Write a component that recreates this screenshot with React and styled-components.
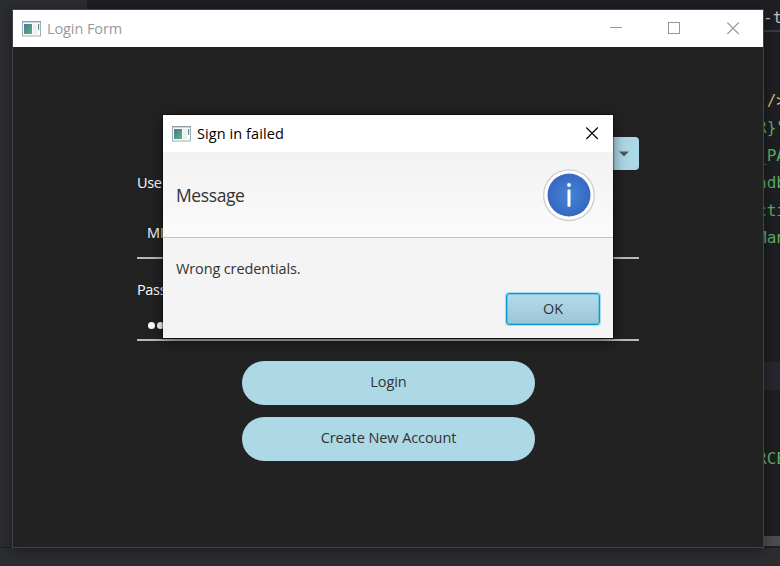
import React from 'react';
import styled, { createGlobalStyle } from 'styled-components';

const GlobalStyle = createGlobalStyle`
  * { box-sizing: border-box; }
  body {
    margin: 0;
    overflow: hidden;
    font-family: 'Open Sans', 'Noto Sans', sans-serif;
    font-size: 14.5px;
  }
`;

const Desktop = styled.div`
  position: relative;
  width: 780px;
  height: 566px;
  overflow: hidden;
  display: flex;
  flex-direction: column;
  background: #2b2d30;
`;

const Ide = styled.div`
  height: 548px;
  display: flex;
  border-bottom: 1px solid #1e1f22;
`;

const Sidebar = styled.div`
  flex: 0 0 87px;
  background: #2b2d30;
`;

const Editor = styled.div`
  flex: 1;
  min-width: 0;
  overflow: hidden;
  display: flex;
  flex-direction: column;
  background: #1e1f22;
  padding-left: 670px;
`;

const TabLine = styled.div`
  height: 32px;
  flex-shrink: 0;
  border-bottom: 2px solid #393b40;
  color: #bcbec4;
  font: 16px/35px 'DejaVu Sans Mono', monospace;
  white-space: pre;
  padding-left: 6px;
`;

const Code = styled.div`
  height: 504px;
  padding-top: 54.5px;
  overflow: hidden;
  font: 16px/27.55px 'DejaVu Sans Mono', monospace;
  color: #5fad65;
`;

const CodeLine = styled.div`
  height: 27.55px;
  white-space: pre;
  background: ${(p) => (p.$current ? '#26282e' : 'transparent')};
`;

const Tag = styled.span`
  color: #d5b778;
`;

const Scrollbar = styled.div`
  height: 10px;
  background: #4b4c4e;
`;

const Window = styled.div`
  position: absolute;
  left: 12px;
  top: 9px;
  width: 752px;
  height: 539px;
  border: 1px solid #424343;
  background: #222222;
  box-shadow: 0 3px 14px rgba(0, 0, 0, 0.4);
`;

const TitleBar = styled.div`
  height: 37px;
  display: flex;
  align-items: center;
  padding: 0 14px 0 9px;
  background: #fff;
  color: ${(p) => (p.$active ? '#000' : '#999')};
`;

const Title = styled.span`
  flex: 1;
  margin-left: 6px;
  white-space: nowrap;
  line-height: 20px;
  letter-spacing: ${(p) => p.$track || '0'};
`;

const Controls = styled.div`
  display: flex;
  gap: 45px;
  margin-right: 9px;
`;

const Form = styled.div`
  width: 502px;
  margin: 90px 0 0 124px;
  display: flex;
  flex-direction: column;
`;

const Combo = styled.div`
  align-self: flex-end;
  width: 160px;
  height: 33px;
  display: flex;
  align-items: center;
  justify-content: flex-end;
  padding-right: 10px;
  border-radius: 4px;
  background: #add8e6;
`;

const Label = styled.label`
  height: 24px;
  line-height: 24px;
  margin-top: ${(p) => p.$gap};
  color: #fff;
  letter-spacing: -0.35px;
`;

const Field = styled.div`
  height: ${(p) => p.$height};
  padding: 0 10px ${(p) => p.$bottom};
  display: flex;
  align-items: flex-end;
  line-height: 20px;
  color: #fff;
  border-bottom: 2px solid #b9b9b9;
`;

const Dots = styled.div`
  display: flex;
  gap: 2px;
  padding-left: 1px;
`;

const Dot = styled.i`
  width: 7px;
  height: 7px;
  border-radius: 50%;
  background: #fff;
`;

const Actions = styled.div`
  display: flex;
  flex-direction: column;
  gap: 12px;
  width: 293px;
  margin: 20px 0 0 105px;
`;

const PillButton = styled.button`
  height: 44px;
  padding: 0 0 3px;
  border: 0;
  border-radius: 22px;
  background: #add8e6;
  color: #333;
  font: inherit;
  letter-spacing: -0.08px;
`;

const Dialog = styled.div`
  position: absolute;
  left: 163px;
  top: 115px;
  width: 450px;
  height: 223px;
  display: flex;
  flex-direction: column;
  background: #f4f4f4;
  box-shadow: 0 0 1px 1px rgba(0, 0, 0, 0.35), 0 4px 14px rgba(0, 0, 0, 0.5);
`;

const DialogHeader = styled.div`
  height: 86px;
  display: flex;
  align-items: center;
  justify-content: space-between;
  padding: 0 18px 0 13px;
  background: linear-gradient(#f2f2f2, #fbfbfb);
  border-bottom: 1px solid #c2c2c2;
`;

const Heading = styled.span`
  color: #333;
  font-size: 17.5px;
  letter-spacing: -0.4px;
  line-height: 24px;
`;

const DialogBody = styled.div`
  flex: 1;
  display: flex;
  flex-direction: column;
  justify-content: space-between;
  padding: 21px 13px 13px;
`;

const Message = styled.span`
  line-height: 20px;
  color: #333;
  letter-spacing: -0.13px;
`;

const OkButton = styled.button`
  align-self: flex-end;
  width: 94px;
  height: 32px;
  padding: 0 0 1px;
  border: 1px solid #039ed3;
  outline: 0;
  border-radius: 3px;
  background: linear-gradient(#b2dced, #9dc4d5);
  box-shadow: inset 0 0 0 1px rgba(3, 158, 211, 0.35), 0 0 0 1px rgba(3, 158, 211, 0.3);
  color: #333;
  font: inherit;
`;

function AppIcon() {
  return (
    <svg width="19" height="16" viewBox="0 0 19 16">
      <defs>
        <linearGradient id="pane" x1="0" y1="0" x2="1" y2="1">
          <stop offset="0" stopColor="#4b78a3" />
          <stop offset="1" stopColor="#59b56f" />
        </linearGradient>
      </defs>
      <rect x="0.5" y="0.5" width="18" height="14.5" fill="#fbfbfb" stroke="#a6adb3" />
      <path d="M0 0.7H19" stroke="#919da5" strokeWidth="1.4" />
      <rect x="2" y="3" width="8" height="10" fill="url(#pane)" />
      <rect x="11" y="3" width="4" height="10" fill="#eceeef" />
      <rect x="16" y="3" width="1.2" height="6" fill="url(#pane)" />
    </svg>
  );
}

function Minimize() {
  return (
    <svg width="13" height="13"><path d="M0 5.5H12" stroke="#999" /></svg>
  );
}

function Maximize() {
  return (
    <svg width="13" height="13"><rect x="0.5" y="0.5" width="11" height="11" fill="none" stroke="#999" /></svg>
  );
}

function Close({ color }) {
  return (
    <svg width="14" height="13"><path d="M1.3 .5L12.8 12M12.8 .5L1.3 12" stroke={color} strokeWidth="1.1" /></svg>
  );
}

function InfoIcon() {
  return (
    <svg width="52" height="54" viewBox="0 0 52 54">
      <defs>
        <radialGradient id="blue">
          <stop offset="0" stopColor="#4585d6" />
          <stop offset="1" stopColor="#3768c2" />
        </radialGradient>
      </defs>
      <circle cx="26" cy="27.2" r="25.3" fill="#fff" stroke="#cfcfcf" strokeWidth="1.4" />
      <circle cx="26" cy="27" r="21.5" fill="url(#blue)" />
      <circle cx="26" cy="17" r="1.9" fill="#fff" />
      <rect x="24.5" y="21.5" width="3" height="17.2" rx="0.6" fill="#fff" />
    </svg>
  );
}

export default function App() {
  return (
    <>
      <GlobalStyle />
      <Desktop>
        <Ide>
          <Sidebar />
          <Editor>
            <TabLine>-t</TabLine>
            <Code>
              <CodeLine>"<Tag>/&gt;</Tag></CodeLine>
              <CodeLine>{'R}"'}</CodeLine>
              <CodeLine>_PA</CodeLine>
              <CodeLine>adb</CodeLine>
              <CodeLine>cti</CodeLine>
              <CodeLine>Man</CodeLine>
              <CodeLine />
              <CodeLine />
              <CodeLine />
              <CodeLine />
              <CodeLine $current />
              <CodeLine />
              <CodeLine />
              <CodeLine>RCE</CodeLine>
            </Code>
            <Scrollbar />
          </Editor>
        </Ide>

        <Window>
          <TitleBar>
            <AppIcon />
            <Title $track="-0.1px">Login Form</Title>
            <Controls>
              <Minimize />
              <Maximize />
              <Close color="#999" />
            </Controls>
          </TitleBar>
          <Form>
            <Combo>
              <svg width="10" height="6"><path d="M0 0.5H10L5 5.5Z" fill="#555" /></svg>
            </Combo>
            <Label $gap="1px">Use</Label>
            <Field $height="64px" $bottom="14px">MI</Field>
            <Label $gap="19px">Pass</Label>
            <Field $height="39px" $bottom="10px">
              <Dots><Dot /><Dot /></Dots>
            </Field>
            <Actions>
              <PillButton>Login</PillButton>
              <PillButton>Create New Account</PillButton>
            </Actions>
          </Form>
        </Window>

        <Dialog>
          <TitleBar $active>
            <AppIcon />
            <Title $track="0.08px">Sign in failed</Title>
            <Close color="#000" />
          </TitleBar>
          <DialogHeader>
            <Heading>Message</Heading>
            <InfoIcon />
          </DialogHeader>
          <DialogBody>
            <Message>Wrong credentials.</Message>
            <OkButton>OK</OkButton>
          </DialogBody>
        </Dialog>
      </Desktop>
    </>
  );
}
